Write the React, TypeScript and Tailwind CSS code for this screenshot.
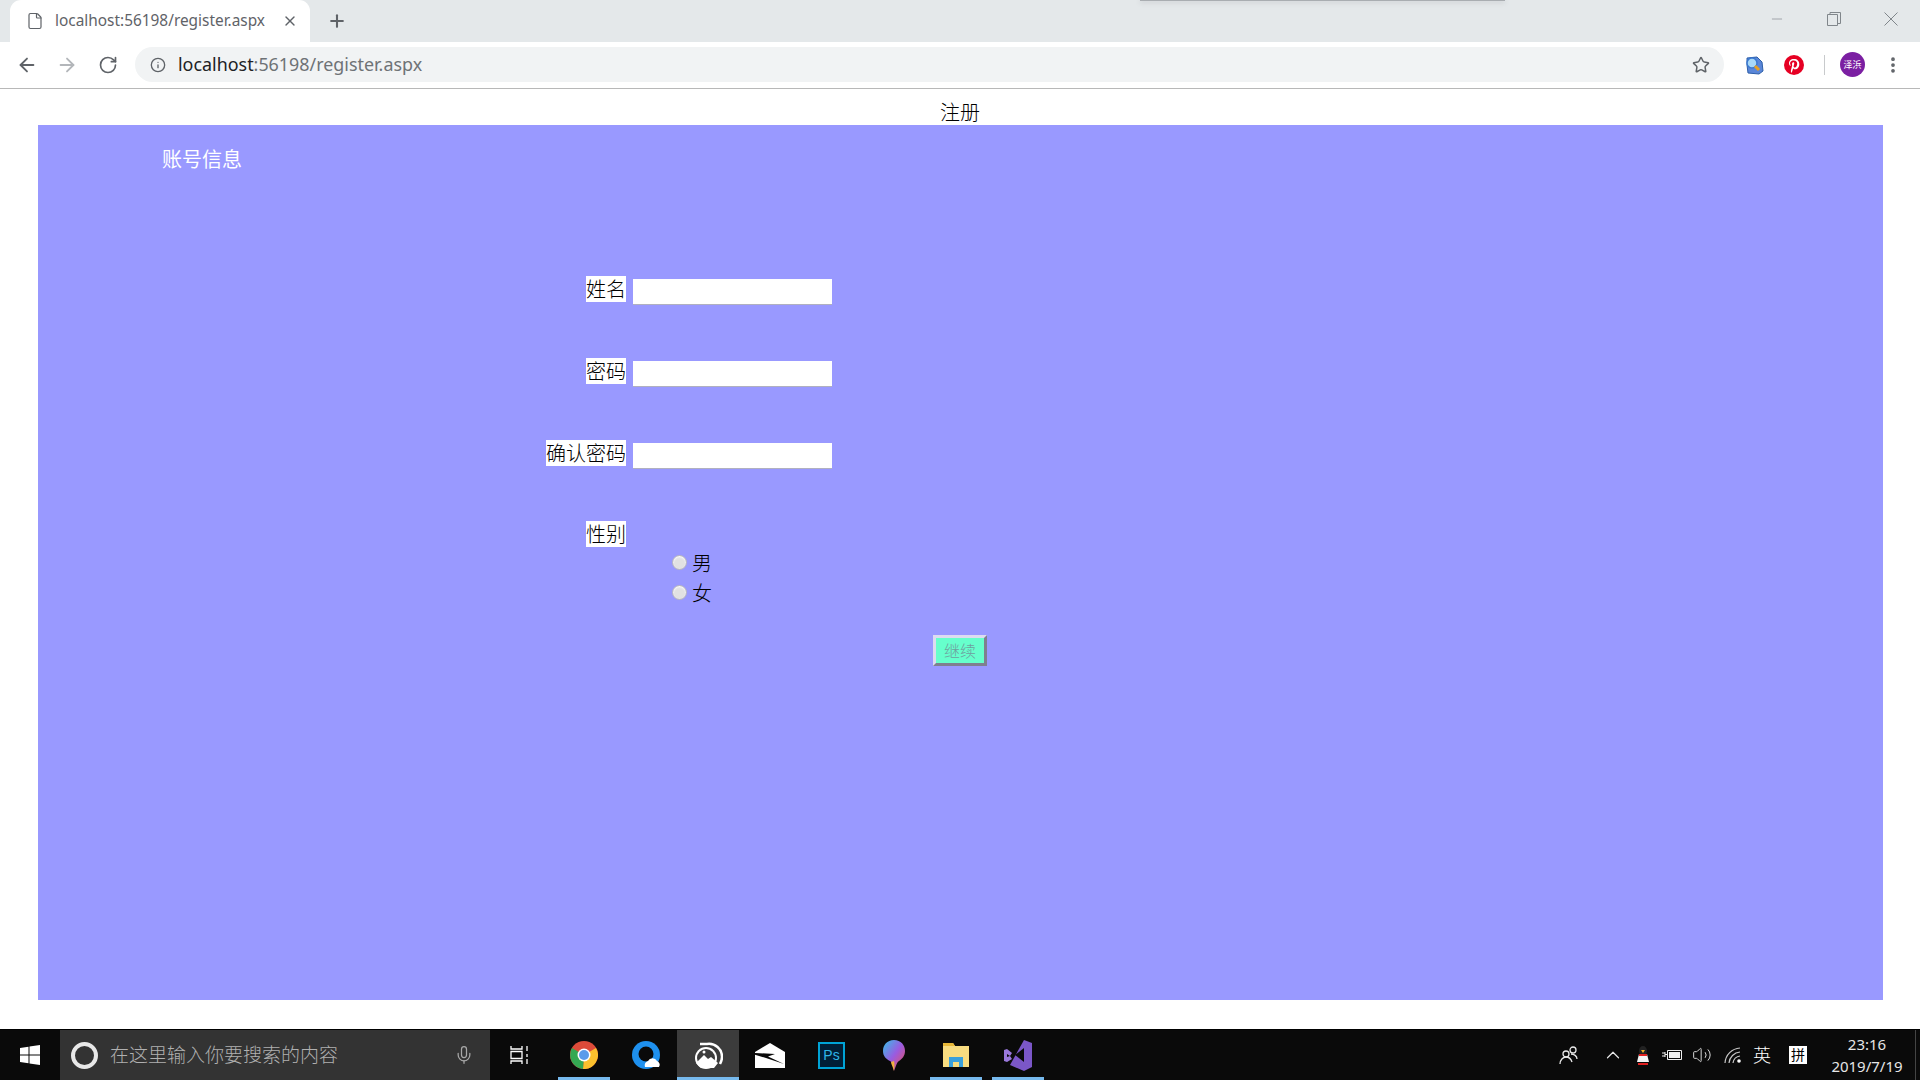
import { ArrowLeft, ArrowRight, RotateCw, Info, Star, Plus, X, Minus, File, Mic, ChevronUp, EllipsisVertical, Volume2 } from 'lucide-react'

const sans = "font-['Noto_Sans','Noto_Sans_CJK_SC',sans-serif]"

const fields = [
  { label: '姓名', top: 'mt-[102px]' },
  { label: '密码', top: 'mt-[53px]' },
  { label: '确认密码', top: 'mt-[53px]' },
]

function Field({ label, top }: { label: string; top: string }) {
  return (
    <div className={`flex items-start ${top}`}>
      <div className="w-[588px] flex justify-end">
        <span className="bg-white text-black text-[20px] font-light leading-[28px] h-[26px]">{label}</span>
      </div>
      <div className="ml-[7px] mt-[3px] w-[199px] h-[26px] bg-white border-b border-[#b0b0c0]" />
    </div>
  )
}

function Radio({ label }: { label: string }) {
  return (
    <div className="flex items-center h-[30px] pl-[634px]">
      <span className="w-[15px] h-[15px] rounded-full bg-[#e2e2e2] border border-[#b4b4c0] shadow-[inset_0_1px_2px_#fff] -mt-[3px]" />
      <span className="ml-[5px] text-[20px] font-light text-black leading-[26px]">{label}</span>
    </div>
  )
}

function Underline({ on }: { on?: boolean }) {
  return on ? <div className="absolute bottom-0 left-[5px] right-[5px] h-[3px] bg-[#76b9ed]" /> : null
}

export default function App() {
  return (
    <div className={`h-screen w-[1920px] flex flex-col overflow-hidden bg-white ${sans}`}>
      {/* Tab strip */}
      <div className="relative h-[42px] shrink-0 bg-[#e4e8ea] flex items-end pl-[10px]">
        <div className="w-[300px] h-[42px] bg-white rounded-t-[11px] flex items-center pl-[16px] pr-[12px]">
          <File size={18} strokeWidth={1.6} className="text-[#5f6368]" />
          <span className="ml-[11px] text-[15.4px] text-[#5f6368] whitespace-nowrap">localhost:56198/register.aspx</span>
          <X size={16} strokeWidth={2} className="ml-auto text-[#5f6368]" />
        </div>
        <Plus size={20} strokeWidth={2.5} className="ml-[17px] mb-[11px] text-[#5f6368]" />
        <div className="ml-auto h-full flex items-start">
          <button className="w-[56px] h-[38px] flex items-center justify-center text-[#80868b]"><Minus size={16} strokeWidth={1} /></button>
          <button className="w-[57px] h-[38px] flex items-center justify-center">
            <svg width="14" height="14" viewBox="0 0 14 14" fill="none" stroke="#80868b"><path d="M.5 2.500h10v11H.5zM3 2.500V.5h10.500v11h-3" /></svg>
          </button>
          <button className="w-[58px] h-[38px] flex items-center justify-center">
            <svg width="14" height="14" viewBox="0 0 14 14" fill="none" stroke="#80868b"><path d="M.5.5l13 13M13.500.5l-13 13" /></svg>
          </button>
        </div>
        <div className="absolute top-0 left-[1140px] w-[365px] h-[1px] bg-[#a9adb1] shadow-[0_1px_5px_#a0a4a8]" />
      </div>

      {/* Toolbar */}
      <div className="h-[47px] shrink-0 bg-white border-b border-[#b8b8b8] flex items-center pb-[1px]">
        <ArrowLeft size={22} strokeWidth={2} className="ml-[16px] text-[#5f6368]" />
        <ArrowRight size={22} strokeWidth={2} className="ml-[18px] text-[#b3b6ba]" />
        <RotateCw size={20} strokeWidth={2} className="ml-[20px] text-[#5f6368]" />
        <div className="ml-[17px] w-[1589px] h-[35px] rounded-full bg-[#f1f3f4] flex items-center pl-[15px] pr-[14px]">
          <Info size={16} strokeWidth={2} className="text-[#5f6368]" />
          <span className="ml-[12px] text-[17.9px] text-[#202124] whitespace-nowrap">localhost<span className="text-[#6e7276]">:56198/register.aspx</span></span>
          <Star size={18} strokeWidth={2} className="ml-auto text-[#5f6368]" />
        </div>
        <svg className="ml-[20px]" width="20" height="20" viewBox="0 0 20 20">
          <path d="M3 3l10-1 5 5 1 9-4 3-11-1-1-8z" fill="#5a86d8" stroke="#2d5fa8" />
          <circle cx="8" cy="8" r="5" fill="#a8d8f8" stroke="#3a78d0" strokeWidth="1.500" />
          <path d="M11 11l4 4" stroke="#e8a020" strokeWidth="3" />
        </svg>
        <svg className="ml-[20px]" width="20" height="20" viewBox="0 0 20 20">
          <circle cx="10" cy="10" r="10" fill="#e60023" />
          <path d="M10 4c-3.500 0-5 2.200-5 4.200 0 1.200.5 2.300 1.500 2.700.3-.6.1-1-.1-1.500-.9-2 .6-4 3.400-4 2.300 0 3.400 1.400 3.400 3.200 0 2.200-1 4-2.400 4-.8 0-1.400-.7-1.200-1.500.2-1 .7-2 .7-2.700 0-1.600-2.300-1.400-2.300.8 0 .6.200 1.100.200 1.100L7 15c-.2 1 0 2.500.1 3 .7-.8 1.300-2 1.500-2.800l.5-1.900c.3.500 1.100 1 1.900 1 2.600 0 4.300-2.300 4.300-5.100C15.300 6 13.200 4 10 4z" fill="#fff" />
        </svg>
        <div className="ml-[20px] w-px h-[20px] bg-[#c8cacc]" />
        <div className="ml-[15px] w-[25px] h-[25px] rounded-full bg-[#7b1fa2] text-white text-[9px] flex items-center justify-center whitespace-nowrap">泽浜</div>
        <EllipsisVertical size={20} strokeWidth={2.5} className="ml-[18px] text-[#5f6368]" />
      </div>

      {/* Page */}
      <div className="flex-1 min-h-0 flex flex-col pb-[29px]">
        <div className="h-[36px] shrink-0 text-center text-[20px] font-light leading-[48px] text-black">注册</div>
        <div className="flex-1 ml-[38px] mr-[37px] bg-[#9999ff]">
          <div className="pl-[124px] pt-[21px] text-[20px] leading-[28px] text-white">账号信息</div>
          {fields.map((f) => (
            <Field key={f.label} label={f.label} top={f.top} />
          ))}
          <div className="flex justify-start mt-[52px]">
            <div className="w-[588px] flex justify-end">
              <span className="bg-white text-black text-[20px] font-light leading-[28px] h-[26px]">性别</span>
            </div>
          </div>
          <div className="mt-[2px]">
            <Radio label="男" />
            <Radio label="女" />
          </div>
          <div className="flex justify-center pr-[1px] mt-[26px]">
            <button className="w-[54px] h-[31px] bg-[#66ffcc] text-[#6f9f9f] text-[16px] font-light leading-none border-[3px] border-t-[#dcdcf0] border-l-[#dcdcf0] border-r-[#7f7f8f] border-b-[#7f7f8f]">继续</button>
          </div>
        </div>
      </div>

      {/* Taskbar */}
      <div className="h-[51px] shrink-0 bg-[#0a0a0a] border-t border-black flex items-center relative">
        <div className="w-[60px] flex justify-center">
          <svg width="20" height="20" viewBox="0 0 20 20" fill="#fff"><path d="M0 3l8.500-1.200V9.500H0zM9.500 1.600L20 0v9.500H9.500zM0 10.500h8.500v7.700L0 17zM9.500 10.500H20V20L9.500 18.400z" /></svg>
        </div>
        <div className="w-[430px] h-full bg-[#333333] flex items-center pl-[11px] pr-[16px]">
          <span className="w-[27px] h-[27px] rounded-full border-[4px] border-[#e8e8e8] bg-transparent" />
          <span className="ml-[12px] text-[19px] font-light text-[#b0b0b0] whitespace-nowrap">在这里输入你要搜索的内容</span>
          <Mic size={20} strokeWidth={1.500} className="ml-auto text-[#a8a8a8]" />
        </div>
        <div className="w-[63px] flex justify-start pl-[20px]">
          <svg width="20" height="20" viewBox="0 0 20 20" fill="none" stroke="#fff" strokeWidth="1.300"><path d="M1 1v3h11V1M1 19v-3h11v3M1 6.500h11v7H1zM17 1v5M17 9v3M17 14v5" /></svg>
        </div>
        <div className="relative w-[62px] h-full flex items-center justify-center">
          <svg width="28" height="28" viewBox="0 0 28 28">
            <circle cx="14" cy="14" r="14" fill="#dd4b39" />
            <path d="M14 14L26 7a14 14 0 0 1-13 21z" fill="#fbc02d" />
            <path d="M14 14L13 28A14 14 0 0 1 2 7z" fill="#34a853" />
            <circle cx="14" cy="14" r="6.500" fill="#fff" />
            <circle cx="14" cy="14" r="5" fill="#5b9bea" />
          </svg>
          <Underline on />
        </div>
        <div className="w-[62px] h-full flex items-center justify-center">
          <svg width="30" height="30" viewBox="0 0 30 30">
            <circle cx="15" cy="15" r="14" fill="#1e90ee" />
            <circle cx="15" cy="14" r="7.500" fill="#0a0a0a" />
            <path d="M14 27a5 5 0 0 1 3-6 5 5 0 0 1 9 0 4 4 0 0 1 2 6z" fill="#fff" />
          </svg>
        </div>
        <div className="relative w-[62px] h-full bg-[#3c3c3c] flex items-center justify-center">
          <svg width="30" height="30" viewBox="0 0 30 30" fill="none">
            <path d="M7 4h7a13 13 0 0 1 15 13c0 3-1 5-2 7" stroke="#fff" strokeWidth="2.500" />
            <circle cx="13" cy="18" r="11" fill="#fff" />
            <circle cx="13" cy="18" r="9" fill="#3c3c3c" />
            <path d="M3 23l8-8 4 4 3-2 7 6-4 5H8z" fill="#fff" />
            <circle cx="11" cy="12" r="1.500" fill="#fff" />
          </svg>
          <div className="absolute bottom-0 inset-x-0 h-[3px] bg-[#76b9ed]" />
        </div>
        <div className="w-[62px] h-full flex items-center justify-center">
          <svg width="30" height="25" viewBox="0 0 30 25">
            <path d="M0 9L15 0l15 9v16H0z" fill="#fff" />
            <path d="M0 10L20 11l-7 2.500L29 21 11 15 0 11.800z" fill="#0a0a0a" />
          </svg>
        </div>
        <div className="w-[61px] h-full flex items-center justify-center">
          <div className="w-[27px] h-[27px] border-2 border-[#00a3d6] bg-[#001e36] text-[#2fb5e8] text-[14px] leading-[23px] text-center font-['Liberation_Sans',sans-serif]">Ps</div>
        </div>
        <div className="w-[63px] h-full flex items-center justify-center">
          <svg width="24" height="31" viewBox="0 0 24 31">
            <defs>
              <linearGradient id="map" x1="0" y1="0" x2="1" y2="1">
                <stop offset="0" stopColor="#35c0e8" />
                <stop offset=".5" stopColor="#9a5be0" />
                <stop offset="1" stopColor="#f0504c" />
              </linearGradient>
            </defs>
            <path d="M12 0c7 0 11 5 11 11 0 5-3 8-6 10-2 1-3 5-5 10-1-5-1-8-4-10-4-2-7-5-7-10C1 5 5 0 12 0z" fill="url(#map)" />
            <path d="M12 21c1 3 0 7 0 10-1-4-3-7-3-9z" fill="#f0b040" />
          </svg>
        </div>
        <div className="relative w-[62px] h-full flex items-center justify-center">
          <svg width="28" height="26" viewBox="0 0 28 26">
            <path d="M1 1h10l2 3h14v21H1z" fill="#f8dc80" />
            <path d="M1 1h10l2 3H1z" fill="#e8b838" />
            <path d="M7 15h14v10h-4v-5h-6v5H7z" fill="#3aa0dc" />
          </svg>
          <Underline on />
        </div>
        <div className="relative w-[62px] h-full flex items-center justify-center">
          <svg width="30" height="31" viewBox="0 0 30 31">
            <path d="M21 0l8 3v24l-8 4-14-6z" fill="#7b57c8" />
            <path d="M21 8v14l-9-7z" fill="#0a0a0a" />
            <path d="M1 10l3-1 5 4-2 3-3-2v3l3-1 2 3-5 3-3-1z" fill="#9a78dc" />
          </svg>
          <Underline on />
        </div>

        {/* Tray */}
        <div className="ml-auto h-full flex items-center text-white">
          <svg width="20" height="20" viewBox="0 0 20 20" fill="none" stroke="#e8e8e8" strokeWidth="1.300"><circle cx="7" cy="9" r="3" /><circle cx="14" cy="5" r="3" /><path d="M1 19c0-4 3-7 6-7s5 2 6 5M12 9c3 0 6 2 6 5" /></svg>
          <ChevronUp size={22} strokeWidth={1.300} className="ml-[23px] text-[#e8e8e8]" />
          <svg className="ml-[12px]" width="14" height="20" viewBox="0 0 14 20">
            <ellipse cx="7" cy="6" rx="4" ry="5" fill="#222" />
            <path d="M3 9h8l2 8H1z" fill="#f4f4f4" />
            <path d="M3 9h8v2H3z" fill="#e02020" />
            <path d="M5 5h4l-2 3z" fill="#f5b020" />
            <path d="M2 18h10v2H2z" fill="#e02020" />
          </svg>
          <svg className="ml-[12px]" width="20" height="14" viewBox="0 0 20 14" fill="none" stroke="#f0f0f0"><path d="M5.500 2.500h14v9h-14z" /><path d="M7 4h11v6H7z" fill="#f0f0f0" stroke="none" /><path d="M0 5h3M0 8h3M3 4v5M3 6.500h2.500" /></svg>
          <Volume2 size={20} strokeWidth={1.200} className="ml-[10px] text-[#d8d8d8]" />
          <svg className="ml-[11px]" width="20" height="20" viewBox="0 0 20 20" fill="none" stroke="#c8c8c8" strokeWidth="1.200">
            <path d="M2 18A16 16 0 0 1 17 3M6 18A12 12 0 0 1 17 7M10 18a8 8 0 0 1 7-7" />
            <circle cx="16" cy="16" r="1.800" fill="#fff" stroke="none" />
          </svg>
          <span className="ml-[10px] w-[20px] text-[18px] font-light text-white leading-none">英</span>
          <span className="ml-[16px] w-[18px] h-[18px] bg-white text-black text-[14px] leading-[18px] text-center">拼</span>
          <div className="ml-[22px] w-[76px] text-[15px] leading-[22px] text-[#e6e6e6] text-center whitespace-nowrap">
            <div>23:16</div>
            <div>2019/7/19</div>
          </div>
          <div className="ml-[10px] w-px h-full bg-[#444]" />
          <div className="w-[4px]" />
        </div>
      </div>
    </div>
  )
}
